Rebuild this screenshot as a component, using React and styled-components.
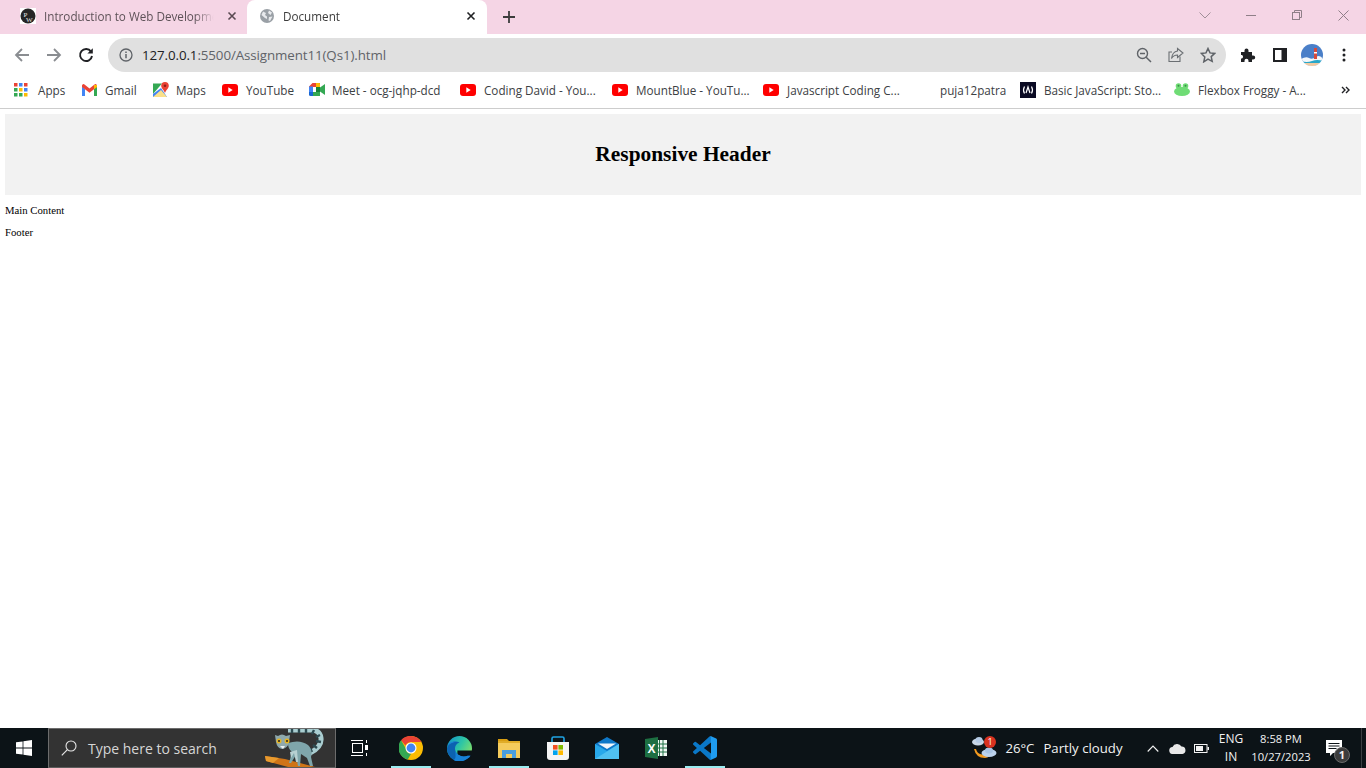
import styled, { createGlobalStyle } from "styled-components"

const GlobalStyle = createGlobalStyle`
	html, body {
		margin: 0;
		padding: 0;
		height: 100%;
		background: white;
		overflow: hidden;
	}
	* {
		box-sizing: border-box;
	}
`
const uiFont = `"Open Sans", "Noto Sans", sans-serif`

const Screen = styled.div`
	width: 100vw;
	height: 100vh;
	display: flex;
	flex-direction: column;
	font-family: ${uiFont};
`
const TabStrip = styled.div`
	height: 34px;
	flex: none;
	display: flex;
	align-items: flex-end;
	padding-left: 12px;
	background: #f5d5e5;
`
const Tab = styled.div`
	width: ${(p) => (p.$active ? 240 : 235)}px;
	height: 34px;
	display: flex;
	align-items: center;
	padding-left: ${(p) => (p.$active ? 13 : 8)}px;
	padding-right: ${(p) => (p.$active ? 11 : 10)}px;
	padding-bottom: 2px;
	gap: ${(p) => (p.$active ? 9 : 8)}px;
	border-radius: 8px 8px 0 0;
	background: ${(p) => (p.$active ? "white" : "transparent")};
	color: ${(p) => (p.$active ? "#3c3c3c" : "#5e5258")};
	font-size: 11.7px;
`
const TabTitle = styled.span`
	flex: 1;
	overflow: hidden;
	white-space: nowrap;
	mask-image: linear-gradient(to right, black 86%, transparent 97%);
`
const PlusBox = styled.div`
	width: 44px;
	height: 34px;
	display: flex;
	align-items: center;
	justify-content: center;
`
const WindowControls = styled.div`
	margin-left: auto;
	display: flex;
	height: 34px;
	align-self: flex-start;
`
const WindowButton = styled.div`
	width: 46px;
	height: 30px;
	display: flex;
	align-items: center;
	justify-content: center;
`
const Toolbar = styled.div`
	height: 38px;
	flex: none;
	display: flex;
	align-items: flex-end;
	padding: 0 6px 0 6px;
	background: white;
`
const NavButton = styled.div`
	width: 32px;
	height: 34px;
	flex: none;
	display: flex;
	align-items: center;
	justify-content: center;
`
const Omnibox = styled.div`
	flex: 1;
	height: 34px;
	margin: 0 6px;
	display: flex;
	align-items: center;
	padding: 0 2px 0 11px;
	border-radius: 17px;
	background: #e0e0e0;
`
const Url = styled.div`
	flex: 1;
	margin-left: 9px;
	font-size: 13.35px;
	letter-spacing: -0.1px;
	color: #5f6368;
	white-space: nowrap;
`
const Host = styled.span`
	color: #202124;
`
const Bookmarks = styled.div`
	height: 37px;
	flex: none;
	display: flex;
	align-items: center;
	padding: 0 0 1px 14px;
	background: white;
	border-bottom: 1px solid #cdcdcd;
	font-size: 11.7px;
	color: #3c4043;
`
const Bookmark = styled.div`
	width: ${(p) => p.$width}px;
	flex: none;
	display: flex;
	align-items: center;
	gap: ${(p) => p.$gap || 8}px;
	white-space: nowrap;
`
const OverflowMark = styled.div`
	margin-left: auto;
	width: 48px;
	display: flex;
	justify-content: center;
`
const Page = styled.div`
	flex: 1;
	padding: 5px;
	font-family: "Liberation Serif", "Times New Roman", serif;
	font-size: 10.72px;
	color: black;
	background: white;
`
const Header = styled.header`
	height: 81px;
	margin-bottom: 9px;
	display: flex;
	align-items: center;
	justify-content: center;
	background: #f2f2f2;
`
const Title = styled.h1`
	margin: 0;
	font-size: 21.4px;
	font-weight: bold;
`
const Paragraph = styled.p`
	margin: 0 0 10px;
	line-height: 12px;
`
const Taskbar = styled.div`
	height: 40px;
	flex: none;
	display: flex;
	align-items: stretch;
	background: #0c1317;
	color: #f2f2f2;
`
const StartButton = styled.div`
	width: 48px;
	display: flex;
	align-items: center;
	justify-content: center;
`
const SearchBox = styled.div`
	width: 288px;
	display: flex;
	align-items: center;
	padding-left: 12px;
	background: #333333;
	border: 1px solid #6c6c6c;
	border-bottom-color: #5c5c5c;
	overflow: hidden;
	font-size: 14px;
	color: #d6d6d6;
`
const SearchText = styled.span`
	margin-left: 11px;
`
const Lemur = styled.svg`
	margin-left: auto;
	flex: none;
	align-self: flex-end;
`
const TaskViewCell = styled.div`
	width: 50px;
	padding-right: 2px;
	display: flex;
	align-items: center;
	justify-content: center;
`
const AppCell = styled.div`
	width: 49px;
	display: flex;
	align-items: center;
	justify-content: center;
	position: relative;
	${(p) =>
		p.$running &&
		`&::after {
			content: "";
			position: absolute;
			left: 5px;
			right: 4px;
			bottom: 0;
			height: 2px;
			background: #99ebf0;
		}`}
`
const Tray = styled.div`
	margin-left: auto;
	display: flex;
	align-items: center;
	font-size: 13.2px;
	color: #f2f2f2;
`
const WeatherText = styled.span`
	white-space: nowrap;
	margin-left: ${(p) => p.$left}px;
`
const TrayIcons = styled.div`
	margin-left: 18px;
	display: flex;
	align-items: center;
`
const TrayIcon = styled.div`
	width: 24.5px;
	display: flex;
	justify-content: center;
`
const StackText = styled.div`
	width: ${(p) => p.$width}px;
	text-align: center;
	font-size: ${(p) => p.$size}px;
	line-height: 18px;
	white-space: nowrap;
`
const Notice = styled.div`
	width: 47px;
	height: 100%;
	display: flex;
	align-items: center;
	justify-content: center;
	border-right: 1px solid #3a3f42;
	margin: 0 4px 0 1px;
`

const WPFavicon = () => (
	<svg width="16" height="16" viewBox="0 0 16 16">
		<rect width="16" height="16" fill="#fff" />
		<circle cx="8" cy="8" r="7.5" fill="#262626" />
		<text x="3.5" y="8.5" fontSize="7" fill="#e8e8e8" fontFamily="Liberation Serif">P</text>
		<text x="6" y="13.5" fontSize="7" fill="#e8e8e8" fontFamily="Liberation Serif">W</text>
	</svg>
)
const Globe = () => (
	<svg width="14" height="14" viewBox="0 0 14 14">
		<circle cx="7" cy="7" r="7" fill="#9aa0a6" />
		<path d="M3 2.5l3 1.5-1 2 2 1.5v2.5l-2-1-3.5-3zM9 1.5l3 2-1.5 2.5L8 4zM9 8l3.5-.5-2.5 4.5-1.5-.5z" fill="#e8eaed" />
	</svg>
)
const CloseX = ({ color }) => (
	<svg width="10" height="10" viewBox="0 0 10 10">
		<path d="M1.5 1.5l7 7M8.5 1.5l-7 7" stroke={color} strokeWidth="1.6" />
	</svg>
)
const Back = () => (
	<svg width="16" height="16" viewBox="0 0 16 16">
		<path d="M15 8H2M8 2L2 8l6 6" stroke="#8a8d91" strokeWidth="1.8" fill="none" />
	</svg>
)
const Forward = () => (
	<svg width="16" height="16" viewBox="0 0 16 16">
		<path d="M1 8h13M8 2l6 6-6 6" stroke="#8a8d91" strokeWidth="1.8" fill="none" />
	</svg>
)
const Reload = () => (
	<svg width="16" height="16" viewBox="0 0 16 16">
		<path d="M13 4.6A6 6 0 1 0 14 9" stroke="#202124" strokeWidth="1.9" fill="none" />
		<path d="M14.8 1.2v5.4H9.4z" fill="#202124" />
	</svg>
)
const Info = () => (
	<svg width="14" height="14" viewBox="0 0 14 14">
		<circle cx="7" cy="7" r="6" stroke="#5f6368" strokeWidth="1.3" fill="none" />
		<path d="M7 6v4.2M7 3.6v1.4" stroke="#5f6368" strokeWidth="1.5" />
	</svg>
)
const ZoomOut = () => (
	<svg width="16" height="16" viewBox="0 0 16 16">
		<circle cx="6.5" cy="6.5" r="5" stroke="#5f6368" strokeWidth="1.4" fill="none" />
		<path d="M10.2 10.2L15 15M4 6.5h5" stroke="#5f6368" strokeWidth="1.5" />
	</svg>
)
const Share = () => (
	<svg width="16" height="16" viewBox="0 0 16 16">
		<path d="M12 9.5V14.5H1V5h3" stroke="#6b6f73" strokeWidth="1.1" fill="none" />
		<path d="M9.5 1.5L15 6l-5.5 4.5V8C7 8 5 9 3.5 11.5 4 7.5 6 4.5 9.5 4z" stroke="#6b6f73" strokeWidth="1.1" fill="none" />
	</svg>
)
const Star = () => (
	<svg width="16" height="16" viewBox="0 0 16 16">
		<path d="M8 1.5l2 4.4 4.7.5-3.5 3.2 1 4.7L8 12.1l-4.2 2.7 1-4.7L1.3 6.4 6 5.9z" stroke="#5f6368" strokeWidth="1.5" fill="none" />
	</svg>
)
const Puzzle = () => (
	<svg width="16" height="16" viewBox="0 0 16 16">
		<path d="M1 5h3.500V3.500a2 2 0 0 1 4 0V5H12v3.500h1.200a2 2 0 0 1 0 4H12V15H8.500v-1.300a2 2 0 0 0-4 0V15H1v-3.500h1a2 2 0 0 0 0-3.500H1z" fill="#202124" />
	</svg>
)
const SidePanel = () => (
	<svg width="14" height="14" viewBox="0 0 14 14">
		<rect x="1" y="1" width="12" height="12" fill="#fff" stroke="#202124" strokeWidth="2" />
		<rect x="8.5" y="1" width="4.5" height="12" fill="#202124" />
	</svg>
)
const Avatar = () => (
	<svg width="22" height="22" viewBox="0 0 22 22">
		<defs>
			<clipPath id="avatarClip">
				<circle cx="11" cy="11" r="11" />
			</clipPath>
		</defs>
		<g clipPath="url(#avatarClip)">
			<rect width="22" height="22" fill="#4a7fc8" />
			<path d="M0 15q5-3 8-1t7-1 7 2v8H0z" fill="#f4f8fb" />
			<path d="M0 17q6 2 11 0t11 0v2H0z" fill="#2aa7c9" />
			<rect y="19" width="22" height="3" fill="#f2c9a0" />
			<rect x="13" y="4" width="3" height="11" fill="#d84a3c" />
			<rect x="13" y="8" width="3" height="1.5" fill="#fff" />
		</g>
	</svg>
)
const Dots = () => (
	<svg width="4" height="14" viewBox="0 0 4 14">
		<circle cx="2" cy="2" r="1.5" fill="#202124" />
		<circle cx="2" cy="7" r="1.5" fill="#202124" />
		<circle cx="2" cy="12" r="1.5" fill="#202124" />
	</svg>
)
const AppsGrid = () => {
	const colors = ["#ea4335", "#4285f4", "#ea4335", "#34a853", "#fbbc04", "#4285f4", "#34a853", "#34a853", "#fbbc04"]
	return (
		<svg width="14" height="14" viewBox="0 0 14 14">
			{colors.map((c, i) => (
				<rect key={i} x={(i % 3) * 5} y={Math.floor(i / 3) * 5} width="3.5" height="3.5" fill={c} />
			))}
		</svg>
	)
}
const Gmail = () => (
	<svg width="15" height="12" viewBox="0 0 15 12">
		<path d="M0 2.5V12h3V5z" fill="#4285f4" />
		<path d="M15 2.5V12h-3V5z" fill="#34a853" />
		<path d="M0 1.5a1.5 1.5 0 0 1 2.5-1L7.5 4.5l5-4a1.5 1.5 0 0 1 2.5 1V3l-3 2.3-4.500 3.400L3 5.300 0 3z" fill="#ea4335" />
		<path d="M12 .9l3 0V3l-3 2.300z" fill="#fbbc04" />
	</svg>
)
const Maps = () => (
	<svg width="16" height="15" viewBox="0 0 16 15">
		<path d="M0 1.5h9L0 12z" fill="#34a853" />
		<path d="M0 15V12L8 6l6 9z" fill="#4285f4" />
		<path d="M0 15h14L8 8z" fill="#fbe08a" />
		<path d="M12 0a3.8 3.8 0 0 1 3.8 3.8C15.8 6.500 13 8 12 11 11 8 8.200 6.500 8.200 3.800A3.800 3.800 0 0 1 12 0z" fill="#ea4335" />
		<circle cx="12" cy="3.8" r="1.3" fill="#8c1d18" />
	</svg>
)
const YouTube = () => (
	<svg width="16" height="12" viewBox="0 0 16 12">
		<rect width="16" height="12" rx="3" fill="#ff0000" />
		<path d="M6.300 3.300l4.400 2.700-4.400 2.700z" fill="#fff" />
	</svg>
)
const Meet = () => (
	<svg width="16" height="13" viewBox="0 0 16 13">
		<path d="M3.500 0H11v4H4v5H0V3.500z" fill="#ea4335" />
		<path d="M0 3.500h4V9H0z" fill="#4285f4" />
		<path d="M0 9h4v4H1.500A1.500 1.500 0 0 1 0 11.500z" fill="#1967d2" />
		<path d="M4 9h7v4H4z" fill="#34a853" />
		<path d="M7 0h3.500A1.500 1.500 0 0 1 11 1.500V4H7z" fill="#fbbc04" />
		<path d="M11 4.500L16 1v11l-5-3.500z" fill="#34a853" />
		<path d="M7 4h4v5H7z" fill="#188038" />
	</svg>
)
const FreeCodeCamp = () => (
	<svg width="16" height="16" viewBox="0 0 16 16">
		<rect width="16" height="16" fill="#0a0a23" />
		<path d="M4.500 4.500Q2.500 8 4.500 11.500M11.500 4.500Q13.500 8 11.500 11.500" stroke="#fff" strokeWidth="1.200" fill="none" />
		<path d="M6 11L8 5l2 6" stroke="#fff" strokeWidth="1.200" fill="none" />
	</svg>
)
const Froggy = () => (
	<svg width="16" height="13" viewBox="0 0 16 13">
		<ellipse cx="8" cy="8.5" rx="8" ry="4.500" fill="#6fdc75" />
		<circle cx="4.500" cy="3" r="2.8" fill="#6fdc75" />
		<circle cx="11.500" cy="3" r="2.8" fill="#6fdc75" />
		<circle cx="4.500" cy="2.8" r="1" fill="#3a8f48" />
		<circle cx="11.500" cy="2.8" r="1" fill="#3a8f48" />
	</svg>
)
const DoubleChevron = () => (
	<svg width="9" height="8" viewBox="0 0 9 8">
		<path d="M1 1l3 3-3 3M5 1l3 3-3 3" stroke="#202124" strokeWidth="1.4" fill="none" />
	</svg>
)
const WindowsLogo = () => (
	<svg width="16" height="16" viewBox="0 0 16 16">
		<path d="M0 2.300l6.600-.9v6.200H0zM7.400 1.300L16 0v7.600H7.400zM0 8.400h6.600v6.200L0 13.700zM7.400 8.400H16V16l-8.600-1.300z" fill="#fff" />
	</svg>
)
const Magnifier = () => (
	<svg width="16" height="16" viewBox="0 0 16 16">
		<circle cx="10" cy="6" r="5" stroke="#e6e6e6" strokeWidth="1.1" fill="none" />
		<path d="M6.400 9.600L.8 15.400" stroke="#e6e6e6" strokeWidth="1.2" />
	</svg>
)
const LemurArt = () => (
	<Lemur width="71" height="38" viewBox="0 0 71 38">
		<path d="M1 27l20 3 30 8H24L2 32z" fill="#cf7417" />
		<path d="M1 27l14 2-6 5-7-2z" fill="#e89a2e" />
		<path d="M46 24q12-6 11-15-1-8-10-8H24" stroke="#a9cdd0" strokeWidth="5" fill="none" />
		<path d="M28 0v4M35 0v4M42 0v4M50 1l-2 4M56 6l-4 2M57 13l-5-1M53 19l-4-3M48 23l-2-4" stroke="#2c4a50" strokeWidth="2.4" />
		<path d="M24 14q12-4 20 2 5 5 3 12l2 9h-3l-3-8-6-4-1 12h-2l-2-11-5 8h-2l3-11q-4-3-4-9z" fill="#7fa6ab" />
		<path d="M26 23l7-2 1 12h-2l-2-9-3 5z" fill="#b8d0d2" />
		<path d="M11 6l3 1q4-3 8 0l4-1-1 7q-1 6-7 7-5-1-6-7z" fill="#8fa9ac" />
		<path d="M16 17h5l-2 3z" fill="#ecf1f1" />
		<circle cx="15" cy="12" r="2.5" fill="#e6b422" />
		<circle cx="23" cy="12" r="2.5" fill="#e6b422" />
		<circle cx="15" cy="12" r="1" fill="#222" />
		<circle cx="23" cy="12" r="1" fill="#222" />
	</Lemur>
)
const TaskView = () => (
	<svg width="18" height="16" viewBox="0 0 18 16">
		<path d="M0 .5h12M0 15.500h12" stroke="#fff" />
		<rect x="1.5" y="3.5" width="10" height="9" stroke="#fff" fill="none" />
		<path d="M15.500 0v3M15.500 13v3" stroke="#fff" />
		<rect x="14" y="5" width="3" height="5" fill="#fff" />
	</svg>
)
const Chrome = () => (
	<svg width="24" height="24" viewBox="0 0 24 24">
		<circle cx="12" cy="12" r="12" fill="#fbbc04" />
		<path d="M12 0a12 12 0 0 1 10.400 6H12a6 6 0 0 0-5.500 3.500L2 4.300A12 12 0 0 1 12 0z" fill="#ea4335" />
		<path d="M2 4.300l4.800 8.300A6 6 0 0 0 12 18l-3.300 5.500A12 12 0 0 1 2 4.300z" fill="#34a853" />
		<circle cx="12" cy="12" r="5.500" fill="#fff" />
		<circle cx="12" cy="12" r="4.400" fill="#4285f4" />
	</svg>
)
const Edge = () => (
	<svg width="25" height="25" viewBox="0 0 24 24">
		<defs>
			<linearGradient id="edgeTop" x1="0" y1="0" x2="1" y2="0.6">
				<stop offset="0" stopColor="#0f8fd0" />
				<stop offset="0.55" stopColor="#2dc5a6" />
				<stop offset="1" stopColor="#7fe06a" />
			</linearGradient>
		</defs>
		<circle cx="12" cy="12" r="12" fill="url(#edgeTop)" />
		<path d="M10 14H24.500V20L16 24.500 10 20z" fill="#0c1317" />
		<path d="M0 12C1 6 7 4 12 6 8 8 7 11 8 14c1 4 6 7 12 5h2.500c-2 3-6.500 5.500-10.500 5.500C5 24.500 0 18 0 12z" fill="#0c62b0" />
		<path d="M9 5.500C5 6 1.500 8 .5 10 2 6 5 5 9 5.500z" fill="#1b84d8" />
		<path d="M8 14c1 4 6 7 12 5h2.500c-2 3-6.500 5.500-10.500 5.500-2 0-4-.5-5.500-1.500C9 22 8 18 8 14z" fill="#1781d6" />
	</svg>
)
const Explorer = () => (
	<svg width="22" height="20" viewBox="0 0 22 20">
		<path d="M0 1h9l2 2H0z" fill="#d99e12" />
		<rect y="3" width="22" height="17" fill="#f4cb5c" />
		<rect y="3" width="22" height="2" fill="#e0ac28" />
		<path d="M4 12h14v8h-4v-4H8v4H4z" fill="#4a9ede" />
	</svg>
)
const Store = () => (
	<svg width="24" height="24" viewBox="0 0 24 24">
		<path d="M6 6V2.500A1.500 1.500 0 0 1 7.500 1h9A1.500 1.500 0 0 1 18 2.500V6" stroke="#1fa4e4" strokeWidth="1.6" fill="none" />
		<path d="M1 6h22v15a3 3 0 0 1-3 3H4a3 3 0 0 1-3-3z" fill="#f4f4f4" />
		<rect x="7" y="9" width="4.6" height="4.6" fill="#f25022" />
		<rect x="12.4" y="9" width="4.6" height="4.6" fill="#7fba00" />
		<rect x="7" y="14.4" width="4.6" height="4.6" fill="#00a4ef" />
		<rect x="12.4" y="14.4" width="4.6" height="4.6" fill="#ffb900" />
	</svg>
)
const Mail = () => (
	<svg width="24" height="22" viewBox="0 0 24 22">
		<path d="M12 0l12 7v15H0V7z" fill="#0f78c8" />
		<path d="M0 7l12 7 12-7v15H0z" fill="#28a8ea" />
		<path d="M3 6.500h18L12 12z" fill="#f2f6fa" />
		<path d="M0 22l24-15v15z" fill="#50c0f0" />
	</svg>
)
const Excel = () => (
	<svg width="22" height="22" viewBox="0 0 22 22">
		<rect x="11" y="3" width="11" height="16" fill="#f2f7f3" />
		<path d="M14.5 3v16M18 3v16M11 7h11M11 11h11M11 15h11" stroke="#217346" />
		<path d="M0 2l13-2v22L0 20z" fill="#1d6f42" />
		<text x="6.5" y="15.5" fontSize="12" fontWeight="bold" fill="#fff" textAnchor="middle" fontFamily="Liberation Sans">X</text>
	</svg>
)
const VSCode = () => (
	<svg width="24" height="24" viewBox="0 0 24 24">
		<defs>
			<linearGradient id="vsFill" x1="0" y1="0" x2="1" y2="0">
				<stop offset="0.72" stopColor="#0a78c8" />
				<stop offset="0.76" stopColor="#1f9cf0" />
			</linearGradient>
		</defs>
		<path
			d="M23.15 2.587L18.21.21a1.494 1.494 0 0 0-1.705.29l-9.46 8.63-4.12-3.128a.999.999 0 0 0-1.276.057L.327 7.261A1 1 0 0 0 .326 8.74L3.899 12 .326 15.26a1 1 0 0 0 .001 1.479L1.65 17.94a.999.999 0 0 0 1.276.057l4.12-3.128 9.46 8.63a1.492 1.492 0 0 0 1.704.29l4.942-2.377A1.5 1.5 0 0 0 24 20.06V3.939a1.5 1.5 0 0 0-.85-1.352zm-5.146 14.861L10.826 12l7.178-5.448v10.896z"
			fill="url(#vsFill)"
		/>
	</svg>
)
const Weather = () => (
	<svg width="25" height="24" viewBox="0 0 25 24">
		<path d="M2 13q2 9 11 9 3 0 4-2l-9-2q-3-1-4-5z" fill="#f39a1f" />
		<ellipse cx="6" cy="6" rx="6" ry="3.500" fill="#c9d7e8" />
		<ellipse cx="7" cy="4" rx="3.500" ry="3" fill="#b5cbe6" />
		<ellipse cx="17" cy="17" rx="7.500" ry="4" fill="#bcd2ec" />
		<ellipse cx="17" cy="14.500" rx="4" ry="3" fill="#a9c4e4" />
		<circle cx="18" cy="6" r="6" fill="#d9321f" />
		<text x="18" y="9" fontSize="9" fill="#fff" textAnchor="middle" fontFamily="Open Sans">1</text>
	</svg>
)
const Caret = () => (
	<svg width="12" height="7" viewBox="0 0 12 7">
		<path d="M.7 6.500L6 1l5.300 5.500" stroke="#f2f2f2" strokeWidth="1.1" fill="none" />
	</svg>
)
const Cloud = () => (
	<svg width="17" height="11" viewBox="0 0 17 11">
		<path d="M4 11a3.500 3.500 0 0 1-.5-7A5 5 0 0 1 12.500 3.500 3.800 3.800 0 0 1 13.500 11z" fill="#e8e8e8" />
	</svg>
)
const Battery = () => (
	<svg width="15" height="9" viewBox="0 0 15 9">
		<rect x=".5" y=".5" width="12.5" height="8" stroke="#f2f2f2" fill="none" />
		<rect x="2" y="2" width="7" height="5" fill="#f2f2f2" />
		<rect x="13.5" y="3" width="1.5" height="3" fill="#f2f2f2" />
	</svg>
)
const NoticeIcon = () => (
	<svg width="28" height="30" viewBox="0 0 28 30">
		<path d="M2 7h16v13H9l-3 3v-3H2z" fill="#fff" />
		<path d="M4.500 10.500h11M4.500 13h11M4.500 15.500h8" stroke="#0c1317" />
		<circle cx="18" cy="22" r="7.500" fill="#3c3c3c" stroke="#6a6a6a" />
		<text x="18" y="26" fontSize="11" fontWeight="bold" fill="#f2f2f2" textAnchor="middle" fontFamily="Open Sans">1</text>
	</svg>
)

const bookmarks = [
	{ icon: <AppsGrid />, label: "Apps", width: 68, gap: 10 },
	{ icon: <Gmail />, label: "Gmail", width: 71, gap: 8 },
	{ icon: <Maps />, label: "Maps", width: 69, gap: 7 },
	{ icon: <YouTube />, label: "YouTube", width: 87 },
	{ icon: <Meet />, label: "Meet - ocg-jqhp-dcd", width: 151, gap: 7 },
	{ icon: <YouTube />, label: "Coding David - You...", width: 152 },
	{ icon: <YouTube />, label: "MountBlue - YouTu...", width: 151 },
	{ icon: <YouTube />, label: "Javascript Coding C...", width: 177 },
	{ label: "puja12patra", width: 80 },
	{ icon: <FreeCodeCamp />, label: "Basic JavaScript: Sto...", width: 154 },
	{ icon: <Froggy />, label: "Flexbox Froggy - A...", width: 150 },
]

const apps = [
	{ icon: <Chrome />, running: true },
	{ icon: <Edge /> },
	{ icon: <Explorer />, running: true },
	{ icon: <Store /> },
	{ icon: <Mail /> },
	{ icon: <Excel /> },
	{ icon: <VSCode />, running: true },
]

const App = () => {
	return (
		<Screen>
			<GlobalStyle />
			<TabStrip>
				<Tab>
					<WPFavicon />
					<TabTitle>Introduction to Web Development</TabTitle>
					<CloseX color="#5a4a52" />
				</Tab>
				<Tab $active>
					<Globe />
					<TabTitle>Document</TabTitle>
					<CloseX color="#202124" />
				</Tab>
				<PlusBox>
					<svg width="12" height="12" viewBox="0 0 12 12">
						<path d="M6 0v12M0 6h12" stroke="#3c3c3c" strokeWidth="1.8" />
					</svg>
				</PlusBox>
				<WindowControls>
					<WindowButton>
						<svg width="12" height="7" viewBox="0 0 12 7">
							<path d="M.5.5L6 6 11.500.5" stroke="#a08f98" fill="none" />
						</svg>
					</WindowButton>
					<WindowButton>
						<svg width="10" height="1" viewBox="0 0 10 1">
							<path d="M0 .5h10" stroke="#8f7f88" />
						</svg>
					</WindowButton>
					<WindowButton>
						<svg width="10" height="10" viewBox="0 0 10 10">
							<rect x=".5" y="2.5" width="7" height="7" stroke="#8f7f88" fill="none" />
							<path d="M2.500 2.500V.5h7v7h-2" stroke="#8f7f88" fill="none" />
						</svg>
					</WindowButton>
					<WindowButton>
						<svg width="11" height="11" viewBox="0 0 11 11">
							<path d="M.5.5l10 10M10.500.5l-10 10" stroke="#8f7f88" />
						</svg>
					</WindowButton>
				</WindowControls>
			</TabStrip>
			<Toolbar>
				<NavButton><Back /></NavButton>
				<NavButton><Forward /></NavButton>
				<NavButton><Reload /></NavButton>
				<Omnibox>
					<Info />
					<Url>
						<Host>127.0.0.1</Host>:5500/Assignment11(Qs1).html
					</Url>
					<NavButton><ZoomOut /></NavButton>
					<NavButton><Share /></NavButton>
					<NavButton><Star /></NavButton>
				</Omnibox>
				<NavButton><Puzzle /></NavButton>
				<NavButton><SidePanel /></NavButton>
				<NavButton><Avatar /></NavButton>
				<NavButton><Dots /></NavButton>
			</Toolbar>
			<Bookmarks>
				{bookmarks.map((b) => (
					<Bookmark key={b.label} $width={b.width} $gap={b.gap}>
						{b.icon}
						<span>{b.label}</span>
					</Bookmark>
				))}
				<OverflowMark><DoubleChevron /></OverflowMark>
			</Bookmarks>
			<Page>
				<Header>
					<Title>Responsive Header</Title>
				</Header>
				<Paragraph>Main Content</Paragraph>
				<Paragraph>Footer</Paragraph>
			</Page>
			<Taskbar>
				<StartButton><WindowsLogo /></StartButton>
				<SearchBox>
					<Magnifier />
					<SearchText>Type here to search</SearchText>
					<LemurArt />
				</SearchBox>
				<TaskViewCell><TaskView /></TaskViewCell>
				{apps.map((a, i) => (
					<AppCell key={i} $running={a.running}>{a.icon}</AppCell>
				))}
				<Tray>
					<Weather />
					<WeatherText $left={8}>26°C</WeatherText>
					<WeatherText $left={9}>Partly cloudy</WeatherText>
					<TrayIcons>
						<TrayIcon><Caret /></TrayIcon>
						<TrayIcon><Cloud /></TrayIcon>
						<TrayIcon><Battery /></TrayIcon>
					</TrayIcons>
					<StackText $width={34} $size={12}>ENG<br />IN</StackText>
					<StackText $width={66} $size={11.2}>8:58 PM<br />10/27/2023</StackText>
					<Notice><NoticeIcon /></Notice>
				</Tray>
			</Taskbar>
		</Screen>
	)
}
export default App
